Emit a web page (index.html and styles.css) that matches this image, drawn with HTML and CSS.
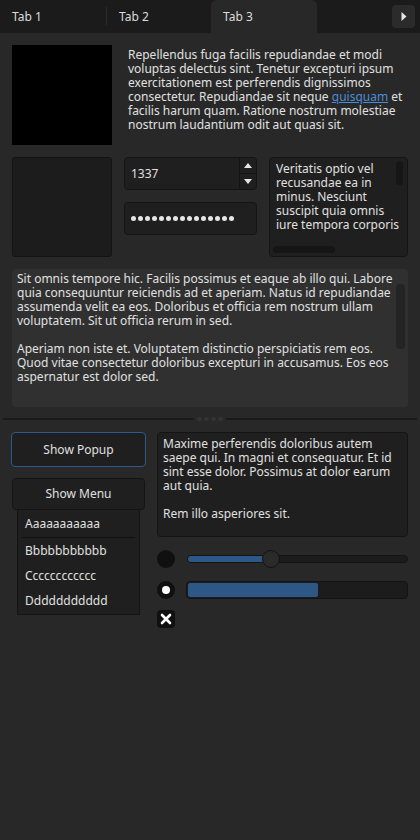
FILE: index.html
```html
<!DOCTYPE html>
<html>
<head>
<meta charset="utf-8">
<link rel="stylesheet" href="styles.css">
</head>
<body>
<div class="tabs">
  <div class="tab">Tab 1</div>
  <div class="tab-sep"></div>
  <div class="tab">Tab 2</div>
  <div class="tab active">Tab 3</div>
  <div class="tab-fill"></div>
  <div class="tab-arrow"><svg width="6" height="9" viewBox="0 0 6 9"><path d="M0.5 0 L5.5 4.5 L0.5 9 Z" fill="#e6e6e6"/></svg></div>
</div>
<div class="content">
  <div class="row1">
    <div class="image"></div>
    <p class="para">Repellendus fuga facilis repudiandae et modi voluptas delectus sint. Tenetur excepturi ipsum exercitationem est perferendis dignissimos consectetur. Repudiandae sit neque <a href="#" class="link">quisquam</a> et facilis harum quam. Ratione nostrum molestiae nostrum laudantium odit aut quasi sit.</p>
  </div>
  <div class="row2">
    <div class="panel"></div>
    <div class="inputs">
      <div class="spin">
        <div class="spin-value">1337</div>
        <div class="spin-btns">
          <div class="spin-btn"><svg width="8" height="5" viewBox="0 0 8 5"><path d="M0 5 L4 0 L8 5 Z" fill="#e6e6e6"/></svg></div>
          <div class="spin-btn"><svg width="8" height="5" viewBox="0 0 8 5"><path d="M0 0 L4 5 L8 0 Z" fill="#e6e6e6"/></svg></div>
        </div>
      </div>
      <div class="password"><span class="dot"></span><span class="dot"></span><span class="dot"></span><span class="dot"></span><span class="dot"></span><span class="dot"></span><span class="dot"></span><span class="dot"></span><span class="dot"></span><span class="dot"></span><span class="dot"></span><span class="dot"></span><span class="dot"></span><span class="dot"></span><span class="dot"></span></div>
    </div>
    <div class="textbox">
      <div class="textbox-text">Veritatis optio vel<br>recusandae ea in<br>minus. Nesciunt<br>suscipit quia omnis<br>iure tempora corporis</div>
      <div class="vscroll small"></div>
      <div class="hscroll"></div>
    </div>
  </div>
  <div class="textarea">
    <div class="textarea-text">
      <p>Sit omnis tempore hic. Facilis possimus et eaque ab illo qui. Labore quia consequuntur reiciendis ad et aperiam. Natus id repudiandae assumenda velit ea eos. Doloribus et officia rem nostrum ullam voluptatem. Sit ut officia rerum in sed.</p>
      <p>Aperiam non iste et. Voluptatem distinctio perspiciatis rem eos. Quod vitae consectetur doloribus excepturi in accusamus. Eos eos aspernatur est dolor sed.</p>
    </div>
    <div class="vscroll big"></div>
  </div>
</div>
<div class="splitter">
  <div class="split-line"></div>
  <div class="split-dots"><span></span><span></span><span></span><span></span></div>
  <div class="split-line"></div>
</div>
<div class="bottom">
  <div class="left-col">
    <button class="btn focused">Show Popup</button>
    <div class="menu-wrap">
      <button class="btn">Show Menu</button>
      <div class="menu">
        <div class="menu-item first">Aaaaaaaaaaa</div>
        <div class="menu-sep"></div>
        <div class="menu-item">Bbbbbbbbbbb</div>
        <div class="menu-item">Cccccccccccc</div>
        <div class="menu-item">Ddddddddddd</div>
      </div>
    </div>
  </div>
  <div class="right-col">
    <div class="note">
      <p>Maxime perferendis doloribus autem saepe qui. In magni et consequatur. Et id sint esse dolor. Possimus at dolor earum aut quia.</p>
      <p>Rem illo asperiores sit.</p>
    </div>
    <div class="ctrl-row">
      <div class="radio"></div>
      <div class="slider">
        <div class="slider-track"><div class="slider-fill" style="width: 84px"></div></div>
        <div class="slider-thumb" style="left: 75px"></div>
      </div>
    </div>
    <div class="ctrl-row">
      <div class="radio checked"><div class="radio-dot"></div></div>
      <div class="progress"><div class="progress-fill" style="width: 130px"></div></div>
    </div>
    <div class="check"><svg width="12" height="12" viewBox="0 0 12 12"><path d="M2 2 L10 10 M10 2 L2 10" stroke="#fff" stroke-width="2.6" stroke-linecap="round"/></svg></div>
  </div>
</div>
</body>
</html>
```

FILE: styles.css
```css
* { box-sizing: border-box; }
html, body {
  margin: 0;
  padding: 0;
  background: #282828;
  color: #e0e0e0;
  font-family: "Noto Sans", "Open Sans", sans-serif;
  font-size: 12px;
  line-height: 14px;
}
p { margin: 0; }

.tabs {
  display: flex;
  align-items: stretch;
  height: 33px;
  background: #1b1b1b;
}
.tab {
  width: 104px;
  padding-left: 12px;
  display: flex;
  align-items: center;
  color: #dcdcdc;
}
.tab:first-child { width: 106px; }
.tab-sep {
  width: 1px;
  background: #2c2c2c;
  margin: 7px 0 8px;
}
.tab.active {
  width: 106px;
  background: #282828;
  border-radius: 6px 6px 0 0;
}
.tab-fill { flex: 1; }
.tab-arrow {
  width: 23px;
  height: 23px;
  margin: 5px 5px 0 0;
  background: #2b2b2b;
  border-radius: 4px;
  display: flex;
  align-items: center;
  justify-content: center;
}
.tab-arrow svg { margin-left: 1px; }

.content {
  padding: 12px 12px 0;
  display: flex;
  flex-direction: column;
  gap: 12px;
}
.row1 { display: flex; gap: 16px; }
.image { width: 100px; height: 100px; background: #000; flex: none; }
.para { padding-top: 3px; }
.link { color: #4a8dd6; text-decoration: underline; }

.row2 { display: flex; gap: 12px; height: 100px; }
.panel {
  width: 100px;
  background: #1c1c1c;
  border: 1px solid #141414;
  border-radius: 3px;
}
.inputs {
  width: 133px;
  display: flex;
  flex-direction: column;
  gap: 12px;
}
.spin, .password {
  height: 33px;
  background: #1f1f1f;
  border: 1px solid #141414;
  border-radius: 4px;
  display: flex;
  align-items: center;
}
.spin-value { flex: 1; padding-left: 6px; }
.spin-btns {
  width: 17px;
  align-self: stretch;
  border-left: 1px solid #141414;
  display: flex;
  flex-direction: column;
}
.spin-btn {
  flex: 1;
  display: flex;
  align-items: center;
  justify-content: center;
}
.spin-btn:first-child { border-bottom: 1px solid #141414; }
.password { padding-left: 6px; gap: 2px; }
.dot {
  width: 5px;
  height: 5px;
  border-radius: 50%;
  background: #e6e6e6;
}

.textbox {
  position: relative;
  width: 139px;
  background: #1f1f1f;
  border: 1px solid #141414;
  border-radius: 4px;
  overflow: hidden;
}
.textbox-text {
  white-space: nowrap;
  padding: 4px 0 0 6px;
}
.vscroll {
  position: absolute;
  width: 7px;
  background: #161616;
  border-radius: 4px;
}
.vscroll.small { right: 4px; top: 3px; height: 24px; }
.hscroll {
  position: absolute;
  left: 3px;
  bottom: 3px;
  width: 62px;
  height: 7px;
  background: #161616;
  border-radius: 4px;
}

.textarea {
  position: relative;
  height: 138px;
  background: #303030;
  border-radius: 4px;
  padding: 3px 5px;
}
.textarea-text p + p { margin-top: 14px; }
.vscroll.big { right: 3px; top: 15px; height: 65px; width: 9px; background: #242424; }

.splitter {
  display: flex;
  align-items: center;
  gap: 3px;
  margin: 10px 3px 0;
  height: 4px;
}
.split-line { flex: 1; height: 2px; background: #1a1a1a; }
.split-dots { display: flex; gap: 2px; }
.split-dots span {
  width: 5px;
  height: 4px;
  border-radius: 2px;
  background: #333;
}

.bottom {
  display: flex;
  gap: 11px;
  padding: 11px 12px 0 11px;
}
.left-col {
  width: 135px;
  display: flex;
  flex-direction: column;
  gap: 11px;
}
.btn {
  font: inherit;
  color: #e0e0e0;
  background: #1f1f1f;
  border: 1px solid #141414;
  border-radius: 4px;
  height: 32px;
  width: 133px;
  margin: 0 1px;
  padding: 0;
}
.btn.focused {
  width: 135px;
  height: 35px;
  margin: 0;
  border: 1px solid #2b5a8c;
}
.menu-wrap { display: flex; flex-direction: column; }
.menu {
  margin-left: 6px;
  width: 123px;
  background: #1f1f1f;
  border: 1px solid #141414;
  border-top: none;
  padding: 0 0 1px;
}
.menu-item {
  height: 25px;
  padding: 1px 0 0 7px;
  display: flex;
  align-items: center;
}
.menu-item.first { height: 27px; }
.menu-sep { height: 1px; background: #111; margin: 0 4px; }

.right-col {
  flex: 1;
  display: flex;
  flex-direction: column;
}
.note {
  height: 105px;
  background: #1f1f1f;
  border: 1px solid #141414;
  border-radius: 4px;
  padding: 4px 5px;
}
.note p + p { margin-top: 14px; }
.ctrl-row {
  display: flex;
  align-items: center;
  gap: 12px;
  height: 18px;
  margin-top: 13px;
}
.radio {
  width: 18px;
  height: 18px;
  border-radius: 50%;
  background: #101010;
  flex: none;
  display: flex;
  align-items: center;
  justify-content: center;
}
.radio-dot { width: 8px; height: 8px; border-radius: 50%; background: #fff; }
.slider {
  position: relative;
  flex: 1;
  height: 18px;
  display: flex;
  align-items: center;
}
.slider-track {
  flex: 1;
  height: 8px;
  background: #1c1c1c;
  border: 1px solid #141414;
  border-radius: 4px;
  overflow: hidden;
}
.slider-fill { height: 100%; background: #2c5786; }
.slider-thumb {
  position: absolute;
  top: 0;
  width: 18px;
  height: 18px;
  border-radius: 50%;
  background: #2a2a2a;
  border: 1px solid #131313;
}
.progress {
  flex: 1;
  height: 18px;
  margin-left: -1px;
  background: #1c1c1c;
  border: 1px solid #141414;
  border-radius: 4px;
  overflow: hidden;
  padding: 1px;
}
.progress-fill { height: 100%; background: #2c5786; border-radius: 2px; }
.check {
  margin-top: 11px;
  width: 18px;
  height: 18px;
  border-radius: 4px;
  background: #101010;
  display: flex;
  align-items: center;
  justify-content: center;
}
```
